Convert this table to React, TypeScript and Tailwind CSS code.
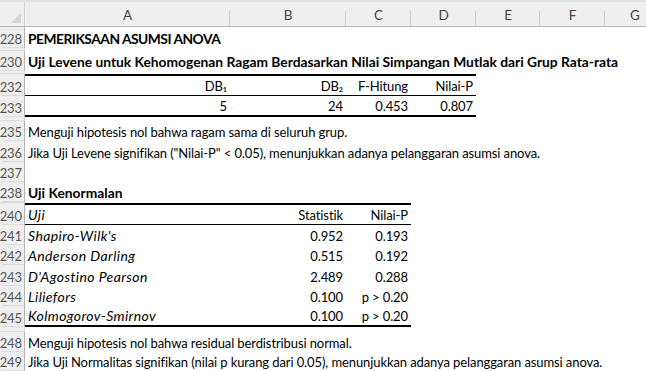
import React from "react";

type Cell = { text: React.ReactNode; align?: "left" | "right"; italic?: boolean; bold?: boolean; tight?: boolean };
type Row = {
  num: string;
  h: number;
  hidden?: boolean;
  cells?: (Cell | null)[];
  span?: Cell;
  border?: string;
  borderW?: number;
};

const COLS = [205, 116, 65, 65, 64, 65];
const LETTERS = ["A", "B", "C", "D", "E", "F", "G"];

const rows: Row[] = [
  { num: "228", h: 21, span: { text: "PEMERIKSAAN ASUMSI ANOVA", bold: true, tight: true } },
  { num: "229", h: 3, hidden: true },
  { num: "230", h: 20, span: { text: "Uji Levene untuk Kehomogenan Ragam Berdasarkan Nilai Simpangan Mutlak dari Grup Rata-rata", bold: true } },
  { num: "231", h: 3, hidden: true },
  {
    num: "232",
    h: 22,
    border: "border-t-2 border-b border-black",
    borderW: 451,
    cells: [
      { text: "DB₁", align: "right" },
      { text: "DB₂", align: "right" },
      { text: "F-Hitung", align: "right" },
      { text: "Nilai-P", align: "right" },
    ],
  },
  {
    num: "233",
    h: 21,
    border: "border-b-2 border-black",
    borderW: 451,
    cells: [
      { text: "5", align: "right" },
      { text: "24", align: "right" },
      { text: "0.453", align: "right" },
      { text: "0.807", align: "right" },
    ],
  },
  { num: "234", h: 4, hidden: true },
  { num: "235", h: 20, span: { text: "Menguji hipotesis nol bahwa ragam sama di seluruh grup." } },
  { num: "236", h: 21, span: { text: 'Jika Uji Levene signifikan ("Nilai-P" < 0.05), menunjukkan adanya pelanggaran asumsi anova.' } },
  { num: "237", h: 20 },
  { num: "238", h: 20, span: { text: "Uji Kenormalan", bold: true } },
  { num: "239", h: 1, hidden: true },
  {
    num: "240",
    h: 22,
    border: "border-t-2 border-b border-black",
    borderW: 386,
    cells: [
      { text: "Uji", italic: true },
      { text: "Statistik", align: "right" },
      { text: "Nilai-P", align: "right" },
    ],
  },
  { num: "241", h: 20, cells: [{ text: "Shapiro-Wilk's", italic: true }, { text: "0.952", align: "right" }, { text: "0.193", align: "right" }] },
  { num: "242", h: 20, cells: [{ text: "Anderson Darling", italic: true }, { text: "0.515", align: "right" }, { text: "0.192", align: "right" }] },
  { num: "243", h: 21, cells: [{ text: "D'Agostino Pearson", italic: true }, { text: "2.489", align: "right" }, { text: "0.288", align: "right" }] },
  { num: "244", h: 20, cells: [{ text: "Liliefors", italic: true }, { text: "0.100", align: "right" }, { text: "p > 0.20", align: "right" }] },
  {
    num: "245",
    h: 21,
    border: "border-b-2 border-black",
    borderW: 386,
    cells: [{ text: "Kolmogorov-Smirnov", italic: true }, { text: "0.100", align: "right" }, { text: "p > 0.20", align: "right" }],
  },
  { num: "246", h: 5, hidden: true },
  { num: "248", h: 20, span: { text: "Menguji hipotesis nol bahwa residual berdistribusi normal." } },
  { num: "249", h: 19, span: { text: "Jika Uji Normalitas signifikan (nilai p kurang dari 0.05), menunjukkan adanya pelanggaran asumsi anova." } },
];

function textCls(c: Cell) {
  if (c.bold) return "font-bold text-[13.8px] " + (c.tight ? "tracking-[-0.5px]" : "tracking-[0px]");
  if (c.italic) return "italic text-[14px] tracking-[0.4px]";
  return "";
}

function CellView({ c, w }: { c: Cell | null; w: number }) {
  return (
    <div
      className={
        "shrink-0 h-full flex items-end px-[3px] whitespace-nowrap " +
        (c?.align === "right" ? "justify-end" : "justify-start")
      }
      style={{ width: w }}
    >
      {c && <span className={"leading-[18px] " + textCls(c)}>{c.text}</span>}
    </div>
  );
}

export default function App() {
  return (
    <div
      className="w-[646px] h-[371px] overflow-hidden bg-white text-black text-[13px] tracking-[-0.1px]"
      style={{ fontFamily: "Lato, 'Open Sans', sans-serif" }}
    >
      <div className="h-[2px] bg-[#e3e3e3]" />
      {/* column header */}
      <div className="flex h-[25px] bg-[#efefef] border-b border-[#b4b4b4]">
        <div className="relative w-[25px] shrink-0 border-r border-[#d0d0d0]">
          <div
            className="absolute right-[3px] bottom-[3px] w-[10px] h-[10px] bg-[#d6d6d6]"
            style={{ clipPath: "polygon(100% 0, 100% 100%, 0 100%)" }}
          />
        </div>
        {LETTERS.map((l, i) => (
          <div
            key={l}
            className="relative shrink-0 flex items-center justify-center text-[#444] text-[13.5px] pt-[2px]"
            style={{ width: i < COLS.length ? COLS[i] : 60 }}
          >
            {l}
            {i < COLS.length && <div className="absolute right-0 bottom-0 h-[15px] w-px bg-[#cfcfcf]" />}
          </div>
        ))}
      </div>
      {/* body */}
      {rows.map((r) =>
        r.hidden ? (
          <div key={r.num} className="flex" style={{ height: r.h }}>
            <div className="w-[25px] shrink-0 bg-[#efefef] border-r border-[#b4b4b4] border-b border-[#dadada]" />
            <div className="flex-1" />
          </div>
        ) : (
          <div key={r.num} className="flex" style={{ height: r.h }}>
            <div className="w-[25px] shrink-0 bg-[#efefef] border-r border-[#b4b4b4] flex items-end justify-end pr-[2px] text-[13px] text-[#555] relative">
              <span className="leading-[18px]">{r.num}</span>
              <div className="absolute left-[2px] right-0 bottom-0 h-px bg-[#dcdcdc]" />
            </div>
            <div className="flex-1 relative">
              {r.span && (
                <div className="h-full flex items-end px-[3px] whitespace-nowrap">
                  <span className={"leading-[18px] " + textCls(r.span)}>{r.span.text}</span>
                </div>
              )}
              {r.cells && (
                <div className={"flex h-full " + (r.border ?? "")} style={{ width: r.borderW ?? COLS[0] + COLS[1] + COLS[2] }}>
                  {r.cells.map((c, i) => (
                    <CellView key={i} c={c} w={COLS[i]} />
                  ))}
                </div>
              )}
            </div>
          </div>
        )
      )}
    </div>
  );
}
